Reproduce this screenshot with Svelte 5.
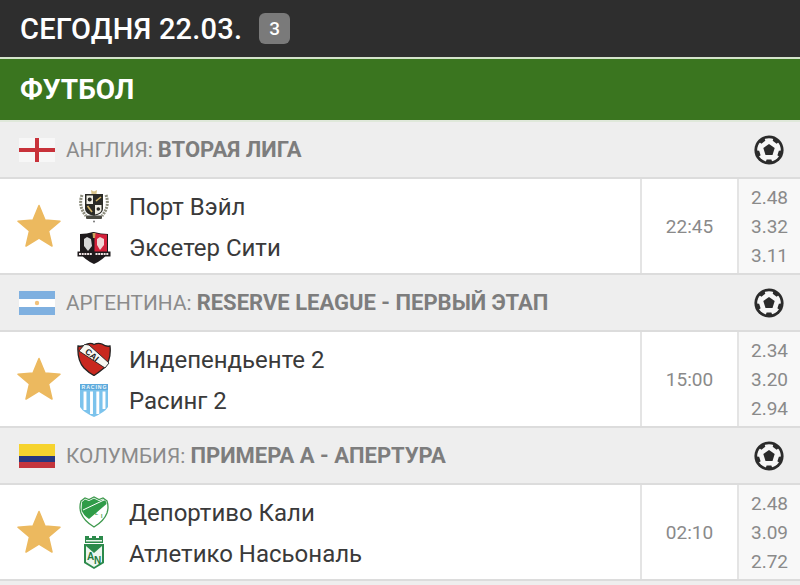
<script>
	const leagues = [
		{
			flag: 'en',
			country: 'АНГЛИЯ:',
			name: 'ВТОРАЯ ЛИГА',
			home: { name: 'Порт Вэйл', crest: 'vale' },
			away: { name: 'Эксетер Сити', crest: 'exeter' },
			time: '22:45',
			odds: ['2.48', '3.32', '3.11']
		},
		{
			flag: 'ar',
			country: 'АРГЕНТИНА:',
			name: 'RESERVE LEAGUE - ПЕРВЫЙ ЭТАП',
			home: { name: 'Индепендьенте 2', crest: 'independiente' },
			away: { name: 'Расинг 2', crest: 'racing' },
			time: '15:00',
			odds: ['2.34', '3.20', '2.94']
		},
		{
			flag: 'co',
			country: 'КОЛУМБИЯ:',
			name: 'ПРИМЕРА А - АПЕРТУРА',
			home: { name: 'Депортиво Кали', crest: 'cali' },
			away: { name: 'Атлетико Насьональ', crest: 'nacional' },
			time: '02:10',
			odds: ['2.48', '3.09', '2.72']
		}
	];
	const patches = [0, 72, 144, 216, 288];
</script>

{#snippet flag(code)}
	<svg class="flag" viewBox="0 0 36 24" width="36" height="24">
		{#if code === 'en'}
			<rect width="36" height="24" fill="#f7f7f7" />
			<rect x="16" width="4" height="24" fill="#c8323a" />
			<rect y="10" width="36" height="4" fill="#c8323a" />
		{:else if code === 'ar'}
			<rect width="36" height="24" fill="#fff" />
			<rect width="36" height="8" fill="#7fb0e0" />
			<rect y="16" width="36" height="8" fill="#7fb0e0" />
			<circle cx="18" cy="12" r="2.2" fill="#f3c27a" />
		{:else}
			<rect width="36" height="12" fill="#f6d32e" />
			<rect y="12" width="36" height="6" fill="#27377f" />
			<rect y="18" width="36" height="6" fill="#c4353d" />
		{/if}
	</svg>
{/snippet}

{#snippet ball()}
	<svg class="ball" viewBox="-15 -15 30 30" width="30" height="30">
		<circle r="14.6" fill="#2b2b2b" />
		<circle r="11.8" fill="#f6f6f6" />
		<path d="M0 -6 L5.7 -1.9 L3.5 4.9 L-3.5 4.9 L-5.7 -1.9Z" fill="#2b2b2b" />
		{#each patches as angle}
			<path d="M-3.6 -13 L3.6 -13 L2.4 -9.6 L-2.4 -9.6Z" fill="#2b2b2b" transform="rotate({angle + 180})" />
		{/each}
	</svg>
{/snippet}

{#snippet crest(kind)}
	<svg class="crest" viewBox="0 0 34 34" width="34" height="34">
		{#if kind === 'vale'}
			<path d="M5 6 Q1 17 9 27 M29 6 Q33 17 25 27" fill="none" stroke="#8c8c7c" stroke-width="3" stroke-dasharray="2 1" />
			<path d="M14.5 5 L14 1 L17 2.5 L20 1 L19.5 5Z" fill="#d8c48c" />
			<path d="M8 5 H26 V20 Q26 25 17 27 Q8 25 8 20Z" fill="#2a2a26" />
			<rect x="9.5" y="6.5" width="6.5" height="8.5" fill="#f1efe6" />
			<path d="M18 16 H24.5 V21 Q24 24 18 25.5Z" fill="#f1efe6" />
			<circle cx="12.7" cy="10.5" r="2" fill="#2a2a26" />
			<circle cx="21.3" cy="20" r="1.8" fill="#2a2a26" />
			<path d="M19 12 L24 8 M10.5 17 L15 23" stroke="#d2b468" stroke-width="1.6" />
			<rect x="9" y="26.5" width="16" height="3.5" rx="1" fill="#4a4a42" />
			<circle cx="17" cy="32.5" r="1" fill="#777" />
		{:else if kind === 'exeter'}
			<path d="M3 4 Q10 4 16 2 L17 2 Q24 4 31 4 L31 22 Q28 29 17 34 Q6 29 3 22Z" fill="#1e1a1c" />
			<path d="M17.5 3 Q24 4.5 30 4.5 L30 22 L17.5 22Z" fill="#d4203a" />
			<path d="M7 9 L10 7 L14 9 L15 16 L11 21 L7 16Z" fill="#d8d8d8" />
			<path d="M20 9 L23 7 L27 9 L27 15 L23 20 L20 15Z" fill="#f0d5d5" />
			<path d="M15.5 3 L18.5 3 L18 8 L16 8Z" fill="#c9a45c" />
			<rect x="0.5" y="21.5" width="33" height="5" fill="#1e1a1c" />
			<path d="M2 24 H15.5 M18.5 24 H32" stroke="#efe3e3" stroke-width="1.8" stroke-dasharray="2 .7" />
		{:else if kind === 'independiente'}
			<path d="M1 4 Q6 5 10 2 Q14 0.5 17 2.5 Q21 0.5 25 2 Q29 5 33 4 Q34.5 18 27 26 Q21 31 17 33.5 Q12 31 7 26 Q0 18 1 4Z" fill="#c8281f" stroke="#222" stroke-width="1.3" />
			<path d="M2 9 L7.5 2.5 Q10 2.5 12 3 L32 21 L28 26Z" fill="#f7f7f2" stroke="#222" stroke-width=".9" />
			<text class="crest-text" x="0" y="0" font-size="8.5" font-weight="700" fill="#222" transform="translate(7.5 10.5) rotate(40)">CAI</text>
		{:else if kind === 'racing'}
			<path d="M3 1 H31 V24 Q28 29 17 34 Q6 29 3 24Z" fill="#7cc3ec" />
			<rect x="3" y="1" width="28" height="6" fill="#5fabdd" />
			<text class="crest-text" x="17" y="6" text-anchor="middle" font-size="5.2" font-weight="700" fill="#eef7fc" textLength="25">RACING</text>
			<path d="M8 8.5 V27 M14.5 8.5 V31 M20.8 8.5 V31 M27 8.5 V26" stroke="#fff" stroke-width="2.9" />
		{:else if kind === 'cali'}
			<path d="M4 6 L8 3 L12 4.5 L17 2 L22 4.5 L26 3 L30 6 Q32 12 30 18 Q27 26 17 32 Q7 26 4 18 Q2 12 4 6Z" fill="#fff" stroke="#3f9a4e" stroke-width="1.3" />
			<path d="M5 7 L8 4.5 L12 6 L17 3.5 L22 6 L26 4.5 L29 6.5 L29.5 9 L12 24 Q6 20 4.5 15Z" fill="#2f9c48" />
			<path d="M6 15 L27 5" stroke="#fff" stroke-width="1" />
			<text class="crest-text" x="18" y="20" font-size="5" font-weight="700" fill="#2f9c48">L</text>
			<text class="crest-text" x="24" y="23" font-size="5" font-weight="700" fill="#2f9c48">I</text>
		{:else}
			<path d="M8 0 H12 V2 H15 V0 H19 V2 H22 V0 H26 V7 H8Z" fill="#2c8a4b" />
			<rect x="9" y="4" width="16" height="1.5" fill="#e8f3ea" />
			<path d="M7 8 H27 V27 L17 33 L7 27Z" fill="#2c8a4b" />
			<path d="M9 10 H25 V26 L17 31 L9 26Z" fill="#eef6f0" />
			<path d="M9 10 H25 L17 17Z" fill="#2c8a4b" />
			<text class="crest-text" x="10" y="24" font-size="10" font-weight="700" fill="#1f7c3e">A</text>
			<text class="crest-text" x="17" y="28" font-size="10" font-weight="700" fill="#1f7c3e">N</text>
		{/if}
	</svg>
{/snippet}

<div class="page">
	<header class="day">
		<h1>СЕГОДНЯ 22.03.</h1>
		<span class="count">3</span>
	</header>
	<div class="sport">ФУТБОЛ</div>

	{#each leagues as league}
		<div class="league">
			{@render flag(league.flag)}
			<span class="title">{league.country} <b>{league.name}</b></span>
			{@render ball()}
		</div>
		<div class="match">
			<div class="fav">
				<svg viewBox="0 0 44 44" width="44" height="44">
					<path
						d="M22 1.5 L28 16 L43 17.2 L31.5 27 L35 42 L22 34 L9 42 L12.5 27 L1 17.2 L16 16Z"
						fill="#ecb95f"
						stroke="#ecb95f"
						stroke-width="1.5"
						stroke-linejoin="round"
					/>
				</svg>
			</div>
			<div class="teams">
				<div class="team">{@render crest(league.home.crest)}<span>{league.home.name}</span></div>
				<div class="team">{@render crest(league.away.crest)}<span>{league.away.name}</span></div>
			</div>
			<div class="time">{league.time}</div>
			<div class="odds">
				{#each league.odds as odd}
					<span>{odd}</span>
				{/each}
			</div>
		</div>
	{/each}
</div>

<style>
	:global(body) {
		background: #eeeeee;
	}

	.page {
		height: 585px;
		overflow: hidden;
		font-family: Roboto, "Noto Sans", sans-serif;
	}

	.day {
		display: flex;
		align-items: center;
		gap: 17px;
		height: 57px;
		padding-left: 20px;
		background: #2e2e2e;
	}

	.day h1 {
		margin: 0;
		font-size: 29px;
		font-weight: 500;
		letter-spacing: 0.2px;
		color: #fff;
	}

	.count {
		display: flex;
		align-items: center;
		justify-content: center;
		width: 31px;
		height: 31px;
		border-radius: 6px;
		background: #7a7a7a;
		color: #fff;
		font-size: 19px;
		font-weight: 500;
	}

	.sport {
		display: flex;
		align-items: center;
		height: 61px;
		margin: 2px 0;
		padding-left: 20px;
		background: #3a751f;
		color: #fff;
		font-size: 28px;
		font-weight: 700;
		box-shadow: 0 -2px 0 #d4e3cb, 0 2px 0 #dfe8da;
	}

	.league {
		display: flex;
		align-items: center;
		height: 57px;
		box-sizing: border-box;
		padding: 0 16px 0 19px;
		background: #eeeeee;
		border-bottom: 2px solid #dcdcdc;
	}

	.flag {
		flex: none;
	}

	.title {
		flex: 1;
		margin-left: 11px;
		font-size: 20.8px;
		color: #8b8b8b;
	}

	.title b {
		font-size: 22px;
		font-weight: 700;
		color: #7d7d7d;
	}

	.ball {
		flex: none;
	}

	.match {
		display: flex;
		height: 96px;
		box-sizing: border-box;
		background: #fff;
		border-bottom: 2px solid #dcdcdc;
	}

	.fav {
		display: flex;
		align-items: center;
		justify-content: center;
		width: 77px;
		box-sizing: border-box;
	}

	.teams {
		flex: 1;
		display: flex;
		flex-direction: column;
		justify-content: center;
		gap: 7px;
	}

	.team {
		display: flex;
		align-items: center;
		height: 34px;
		gap: 18px;
		font-size: 24px;
		color: #3a3a3a;
	}

	.team span {
		padding-top: 2px;
	}

	.crest {
		flex: none;
	}

	.crest-text {
		font-family: "Liberation Sans", sans-serif;
	}

	.time {
		display: flex;
		align-items: center;
		justify-content: center;
		width: 97px;
		box-sizing: border-box;
		border-left: 2px solid #e4e4e4;
		font-size: 19px;
		color: #8a8a8a;
	}

	.odds {
		display: flex;
		flex-direction: column;
		justify-content: center;
		width: 63px;
		padding-left: 12px;
		box-sizing: border-box;
		background: #f8f8f8;
		border-left: 2px solid #e4e4e4;
		font-size: 19px;
		line-height: 29px;
		color: #8a8a8a;
	}
</style>
